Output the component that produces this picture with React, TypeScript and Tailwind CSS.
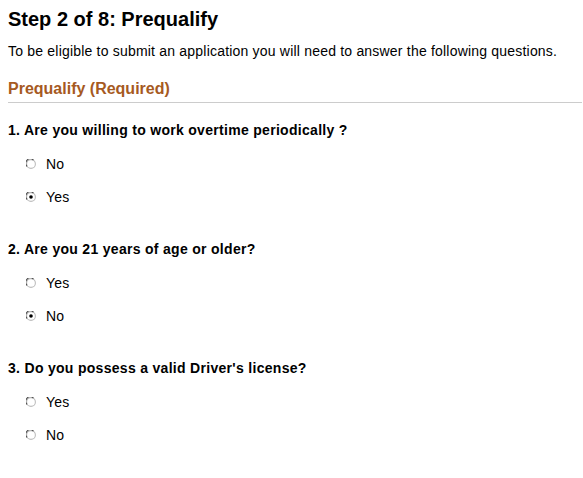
import { useState } from 'react'

type Question = {
  id: string
  text: string
  options: string[]
  initial: string | null
}

const questions: Question[] = [
  { id: 'overtime', text: '1. Are you willing to work overtime periodically ?', options: ['No', 'Yes'], initial: 'Yes' },
  { id: 'age', text: '2. Are you 21 years of age or older?', options: ['Yes', 'No'], initial: 'No' },
  { id: 'license', text: "3. Do you possess a valid Driver's license?", options: ['Yes', 'No'], initial: null },
]

function Radio({ checked }: { checked: boolean }): React.JSX.Element {
  return (
    <svg width="10" height="10" viewBox="0 0 10 10" className="shrink-0">
      <circle cx="5" cy="5" r="4.4" fill="#fff" stroke="#bdbdbd" strokeWidth="1.1" />
      <path d="M1.1 7.4 A4.4 4.4 0 0 1 7.4 1.1" fill="none" stroke="#4a4a4a" strokeWidth="1.1" />
      {checked && <circle cx="5" cy="5" r="1.8" fill="#000" />}
    </svg>
  )
}

function QuestionBlock({ q, first }: { q: Question; first: boolean }): React.JSX.Element {
  const [value, setValue] = useState<string | null>(q.initial)
  return (
    <div className={first ? 'mt-[18px]' : 'mt-[34px]'}>
      <div className="text-[14px] leading-[18px] font-bold tracking-[0.3px] text-black">{q.text}</div>
      {q.options.map((opt, i) => (
        <label
          key={opt}
          onClick={() => setValue(opt)}
          className={`flex items-center gap-[10px] pl-[18px] text-[14px] leading-[18px] tracking-[0.2px] text-black cursor-default ${
            i === 0 ? 'mt-[16px]' : 'mt-[15px]'
          }`}
        >
          <Radio checked={value === opt} />
          <span>{opt}</span>
        </label>
      ))}
    </div>
  )
}

export default function App(): React.JSX.Element {
  return (
    <div className="min-h-[478px] bg-white pl-[8px] pr-[1px] pt-[7px] font-['Liberation_Sans',Arial,sans-serif]">
      <h1 className="text-[20px] leading-[24px] font-bold text-black">Step 2 of 8: Prequalify</h1>
      <p className="mt-[11px] text-[14px] leading-[18px] tracking-[0.2px] text-black">
        To be eligible to submit an application you will need to answer the following questions.
      </p>
      <h2 className="mt-[19px] pb-[3px] border-b border-[#cccccc] text-[16px] leading-[20px] font-bold text-[#a65a1f]">
        Prequalify (Required)
      </h2>
      {questions.map((q, i) => (
        <QuestionBlock key={q.id} q={q} first={i === 0} />
      ))}
    </div>
  )
}
